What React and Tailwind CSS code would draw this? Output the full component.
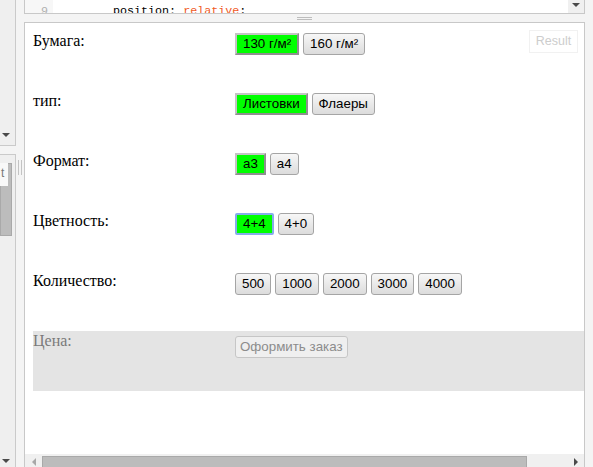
import React from 'react';

const serif = "font-['Liberation_Serif',serif]";
const sans = "font-['Liberation_Sans',Arial,sans-serif]";

const Btn = ({ children, active, focus, disabled }) => {
    let cls = 'h-[22px] text-[13.33px] leading-none whitespace-nowrap ' + sans;
    if (disabled) {
        cls += ' px-[4px] rounded-[3px] border border-[#c6c6c6] bg-[#efefef] text-[#8c8c8c]';
    } else if (focus) {
        cls += ' px-[6px] rounded-[2px] border-2 border-[#86acea] bg-[#00ff00] text-black';
    } else if (active) {
        cls += ' px-[6px] border-2 border-t-[#c4c4c4] border-l-[#c4c4c4] border-b-[#8f8f8f] border-r-[#8f8f8f] bg-[#00ff00] text-black';
    } else {
        cls += ' px-[6px] rounded-[3px] border border-[#a5a5a5] bg-linear-to-b from-[#f7f7f7] to-[#dcdcdc] text-black';
    }
    return <button type="button" disabled={disabled} className={cls}>{children}</button>;
};

const Row = ({ label, children, last }) => (
    <div className={`flex ${last ? 'h-[58px]' : 'h-[60px]'}`}>
        <div className={`-mt-[1px] w-[202px] text-[16px] leading-[18px] text-black ${serif}`}>{label}</div>
        <div className="flex gap-[4px]">{children}</div>
    </div>
);

const Down = ({ className = '' }) => (
    <div className={`h-0 w-0 border-x-[4px] border-t-[4px] border-x-transparent border-t-[#4a4a4a] ${className}`} />
);

const App = () => {
    return (
        <div className="flex h-[467px] w-[593px] overflow-hidden bg-[#f4f4f4]">
            {/* left strip */}
            <div className="flex w-[16px] flex-col">
                <div className="relative h-[146px] border-r border-b border-[#cacaca] bg-[#efefef]">
                    <Down className="absolute left-[2px] top-[133px]" />
                </div>
                <div className="h-[8px]" />
                <div className="relative flex-1 border-r border-t border-[#cacaca] bg-[#efefef]">
                    <div className="mt-[8px] h-[73px] w-[12px] border border-[#a9a9a9] bg-[#bcbcbc]" />
                    <div className={`absolute left-0 top-[8px] h-[23px] w-[8px] bg-[#f8f8f8] pl-[1px] pt-[3px] text-[12px] leading-[14px] text-[#777] ${sans}`}>t</div>
                    <Down className="absolute bottom-[4px] left-[2px]" />
                </div>
            </div>

            {/* gutter between panels */}
            <div className="flex w-[8px] justify-center pt-[160px]">
                <div className="flex h-[15px] gap-[2px]">
                    <div className="w-px bg-[#c3c3c3]" />
                    <div className="w-px bg-[#c3c3c3]" />
                </div>
            </div>

            {/* main column */}
            <div className="flex w-[561px] flex-col">
                {/* css editor, scrolled so the line is cut by the panel edge */}
                <div className="flex h-[14px] overflow-hidden border-x border-b border-[#c8c8c8] bg-white">
                    <div className="w-[28px] bg-[#f7f7f7] pr-[5px] pt-[4px] text-right font-['Liberation_Mono',monospace] text-[11.7px] leading-[15px] text-[#b0b0b0]">9</div>
                    <div className="flex-1 pl-[60px] pt-[4px] font-['Liberation_Mono',monospace] text-[11.7px] leading-[15px] text-black">
                        position: <span className="text-[#f05a1e]">relative</span>;
                    </div>
                    <div className="flex w-[16px] justify-center bg-[#f0f0f0] pt-[3px]">
                        <Down />
                    </div>
                </div>

                {/* resize handle */}
                <div className="flex h-[8px] flex-col items-center justify-center gap-[1px]">
                    <div className="h-px w-[15px] bg-[#bdbdbd]" />
                    <div className="h-px w-[15px] bg-[#bdbdbd]" />
                </div>

                {/* result panel */}
                <div className="flex flex-1 flex-col border-x border-t border-[#c8c8c8] bg-white">
                    <div className="relative flex-1 overflow-hidden pl-[8px] pt-[10px]">
                        <div className={`absolute right-[6px] top-[7px] flex h-[23px] w-[49px] items-center justify-center border border-[#f1f1f1] text-[12.5px] text-[#cdcdcd] ${sans}`}>Result</div>

                        <Row label="Бумага:">
                            <Btn active>130 г/м²</Btn>
                            <Btn>160 г/м²</Btn>
                        </Row>
                        <Row label="тип:">
                            <Btn active>Листовки</Btn>
                            <Btn>Флаеры</Btn>
                        </Row>
                        <Row label="Формат:">
                            <Btn active>a3</Btn>
                            <Btn>a4</Btn>
                        </Row>
                        <Row label="Цветность:">
                            <Btn focus>4+4</Btn>
                            <Btn>4+0</Btn>
                        </Row>
                        <Row label="Количество:" last>
                            <Btn>500</Btn>
                            <Btn>1000</Btn>
                            <Btn>2000</Btn>
                            <Btn>3000</Btn>
                            <Btn>4000</Btn>
                        </Row>
                        <div className="flex h-[60px] bg-[#e4e4e4] pt-[2px]">
                            <div className={`-mt-[1px] w-[202px] text-[16px] leading-[18px] text-[#7a7a7a] ${serif}`}>Цена:</div>
                            <div>
                                <Btn disabled>Оформить заказ</Btn>
                            </div>
                        </div>
                    </div>

                    {/* horizontal scrollbar */}
                    <div className="flex h-[13px] items-end bg-[#f0f0f0]">
                        <div className="flex h-[13px] w-[17px] items-center justify-center pt-[2px]">
                            <div className="h-0 w-0 border-y-[4px] border-r-[4px] border-y-transparent border-r-[#a8a8a8]" />
                        </div>
                        <div className="h-[11px] w-[485px] border border-b-0 border-[#a9a9a9] bg-[#bcbcbc]" />
                        <div className="flex-1" />
                        <div className="flex h-[13px] w-[16px] items-center justify-center pt-[2px]">
                            <div className="h-0 w-0 border-y-[4px] border-l-[4px] border-y-transparent border-l-[#4a4a4a]" />
                        </div>
                    </div>
                </div>
            </div>
        </div>
    );
};

export default App;
